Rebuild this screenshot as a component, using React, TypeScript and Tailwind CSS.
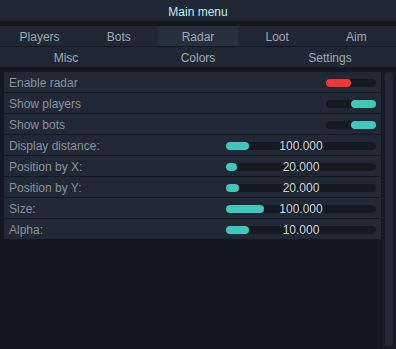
import React from 'react';

type Row =
  | { kind: 'toggle'; label: string; on: boolean; color: 'red' | 'teal' }
  | { kind: 'slider'; label: string; value: string; fill: number };

const topTabs = ['Players', 'Bots', 'Radar', 'Loot', 'Aim'];
const bottomTabs = ['Misc', 'Colors', 'Settings'];

const rows: Row[] = [
  { kind: 'toggle', label: 'Enable radar', on: false, color: 'red' },
  { kind: 'toggle', label: 'Show players', on: true, color: 'teal' },
  { kind: 'toggle', label: 'Show bots', on: true, color: 'teal' },
  { kind: 'slider', label: 'Display distance:', value: '100.000', fill: 23 },
  { kind: 'slider', label: 'Position by X:', value: '20.000', fill: 11 },
  { kind: 'slider', label: 'Position by Y:', value: '20.000', fill: 13 },
  { kind: 'slider', label: 'Size:', value: '100.000', fill: 38 },
  { kind: 'slider', label: 'Alpha:', value: '10.000', fill: 23 },
];

const Toggle = ({ on, color }: { on: boolean; color: 'red' | 'teal' }) => (
  <div className={`flex h-[8px] w-[50px] rounded-full bg-[#131a24] ${on ? 'justify-end' : 'justify-start'}`}>
    <div className={`h-full w-[25px] rounded-full ${color === 'red' ? 'bg-[#f23535]' : 'bg-[#41c7b9]'}`} />
  </div>
);

const Slider = ({ value, fill }: { value: string; fill: number }) => (
  <div className="relative flex h-[8px] w-[150px] items-center rounded-full bg-[#131a24]">
    <div className="h-full rounded-full bg-[#41c7b9]" style={{ width: fill }} />
    <span className="absolute inset-0 flex items-center justify-center text-[12px] text-[#d3d7db]">{value}</span>
  </div>
);

export default function App() {
  return (
    <div className="flex h-[349px] w-[396px] flex-col overflow-hidden bg-[#111821] font-['Liberation_Sans',Arial,sans-serif] text-[12px]">
      {/* title */}
      <div className="flex h-[21px] shrink-0 items-center justify-center bg-[#1e2733] pt-[3px] text-[#c0eef0]">Main menu</div>

      {/* tabs */}
      <div className="mt-[5px] flex flex-col gap-px">
        <div className="grid h-[20px] grid-cols-5">
          {topTabs.map(t => (
            <div
              key={t}
              className={`flex items-center justify-center pt-px text-[#9fa9b3] ${t === 'Radar' ? 'bg-[#26303d]' : 'bg-[#1e2733]'}`}
            >
              {t}
            </div>
          ))}
        </div>
        <div className="grid h-[20px] grid-cols-3">
          {bottomTabs.map(t => (
            <div key={t} className="flex items-center justify-center bg-[#1e2733] pt-px text-[#9fa9b3]">
              {t}
            </div>
          ))}
        </div>
      </div>

      {/* content */}
      <div className="mt-[5px] flex flex-1 pl-[4px]">
        <div className="flex w-[377px] flex-col self-start">
          {rows.map(r => (
            <div
              key={r.label}
              className="flex h-[21px] items-center justify-between border-b border-[#131a23] bg-[#1f2834] pl-[5px] pr-[5px] pt-[2px] text-[#87929d]"
            >
              <span>{r.label}</span>
              {r.kind === 'toggle' ? <Toggle on={r.on} color={r.color} /> : <Slider value={r.value} fill={r.fill} />}
            </div>
          ))}
        </div>
        <div className="ml-[1px] flex w-[14px] justify-center bg-[#151c26] pb-[3px]">
          <div className="h-full w-[8px] rounded-[3px] bg-[#1f2834]" />
        </div>
      </div>
    </div>
  );
}
